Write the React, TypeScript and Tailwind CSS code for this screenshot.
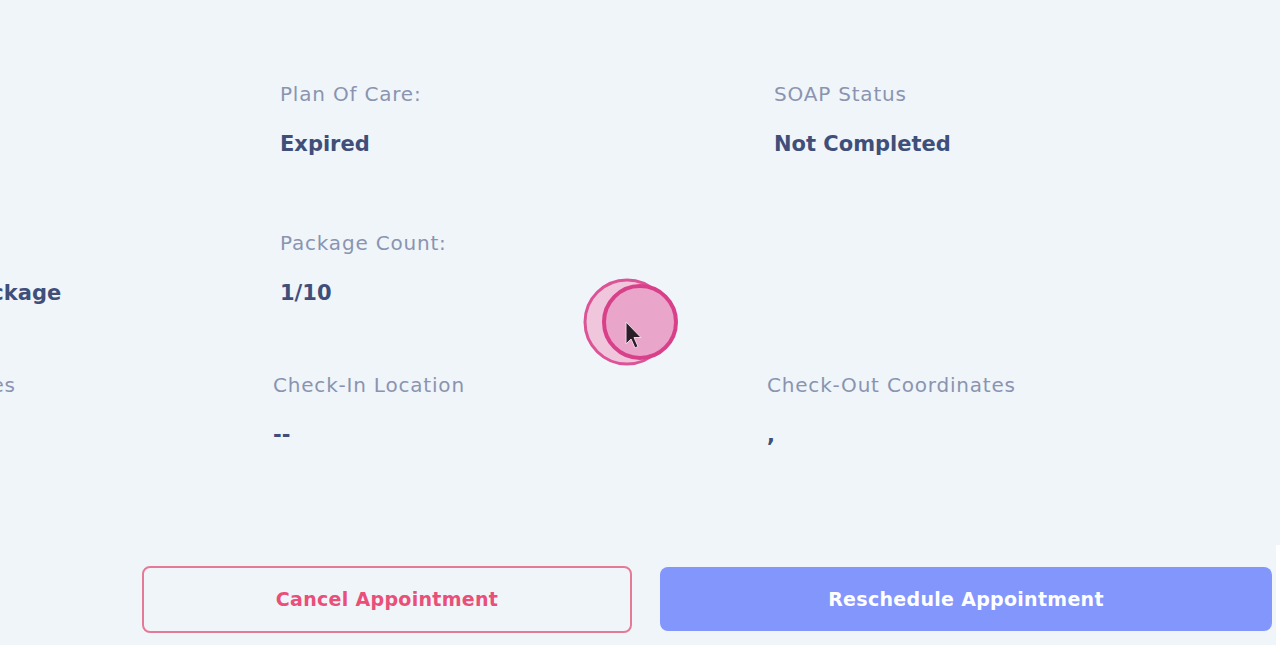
import React from 'react';

type Field = { label: string; value: string };

const font = { fontFamily: '"DejaVu Sans", "Noto Sans", sans-serif' };

function InfoCell({ label, value }: Field) {
  return (
    <div className="flex flex-col">
      <span className="text-[20px] leading-[28px] text-[#8a94b0] whitespace-nowrap tracking-[0.8px]">{label || '\u00a0'}</span>
      <span className="mt-[21px] text-[21px] leading-[30px] font-semibold text-[#3f4f7a] whitespace-nowrap">
        {value || '\u00a0'}
      </span>
    </div>
  );
}

const rowOne: Field[] = [
  { label: 'Visit Type:', value: '' },
  { label: 'Plan Of Care:', value: 'Expired' },
  { label: 'SOAP Status', value: 'Not Completed' },
];

const rowTwo: Field[] = [
  { label: 'Type:', value: 'Standard Visit Package' },
  { label: 'Package Count:', value: '1/10' },
  { label: '', value: '' },
];

const rowThree: Field[] = [
  { label: 'Check-In Coordinates', value: '' },
  { label: 'Check-In Location', value: '--' },
  { label: 'Check-Out Coordinates', value: ',' },
];

function ClickPulse() {
  return (
    <svg className="absolute left-[580px] top-[275px]" width="104" height="96" viewBox="0 0 104 96">
      <circle cx="47" cy="47" r="42" fill="#f0c6dc" stroke="#dc5498" strokeWidth="3" />
      <circle cx="60" cy="47" r="36" fill="#e9a5ca" stroke="#d8408a" strokeWidth="4" />
      <path
        d="M46 47 L46 69 L51 64 L55 73 L58 71.5 L54 62.5 L61 62.5 Z"
        fill="#2a1f28"
        stroke="#f3d6e6"
        strokeWidth="1"
        strokeLinejoin="round"
      />
    </svg>
  );
}

export default function App() {
  return (
    <div className="relative w-[1280px] h-[645px] overflow-hidden bg-[#f0f5fa]" style={font}>
      <div className="pt-[80px]">
        <div className="ml-[-214px] grid grid-cols-[494px_494px_494px]">
          {rowOne.map((f) => (
            <InfoCell key={f.label} {...f} />
          ))}
        </div>
        <div className="mt-[70px] ml-[-214px] grid grid-cols-[494px_494px_494px]">
          {rowTwo.map((f, i) => (
            <InfoCell key={i} {...f} />
          ))}
        </div>
        <div className="mt-[63px] ml-[-214px] grid grid-cols-[487px_494px_494px]">
          {rowThree.map((f) => (
            <InfoCell key={f.label} {...f} />
          ))}
        </div>
      </div>

      <div className="mt-[116px] flex items-start gap-[28px] pl-[142px]">
        <button className="w-[490px] h-[67px] rounded-[8px] border-2 border-[#e57a97] text-[19px] font-bold text-[#e94f78] tracking-[0.3px]">
          Cancel Appointment
        </button>
        <button className="w-[612px] h-[64px] mt-[1px] rounded-[8px] bg-[#8396fb] text-[19px] font-bold text-white tracking-[0.3px]">
          Reschedule Appointment
        </button>
      </div>

      <div className="absolute right-0 top-[545px] w-[4px] h-[100px] bg-white" />
      <ClickPulse />
    </div>
  );
}
